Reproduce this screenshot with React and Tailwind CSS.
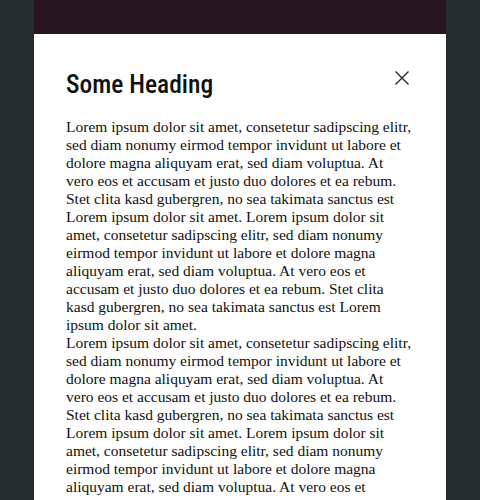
const lorem =
    "Lorem ipsum dolor sit amet, consetetur sadipscing elitr, sed diam nonumy eirmod tempor invidunt ut labore et dolore magna aliquyam erat, sed diam voluptua. At vero eos et accusam et justo duo dolores et ea rebum. Stet clita kasd gubergren, no sea takimata sanctus est Lorem ipsum dolor sit amet. Lorem ipsum dolor sit amet, consetetur sadipscing elitr, sed diam nonumy eirmod tempor invidunt ut labore et dolore magna aliquyam erat, sed diam voluptua. At vero eos et accusam et justo duo dolores et ea rebum. Stet clita kasd gubergren, no sea takimata sanctus est Lorem ipsum dolor sit amet.";

function CloseIcon() {
    return (
        <svg width="14" height="14" viewBox="0 0 14 14" fill="none" stroke="currentColor" strokeWidth="1.3">
            <path d="M0.5 0.5 L13.5 13.5 M13.5 0.5 L0.5 13.5" />
        </svg>
    );
}

export default function App() {
    return (
        <div className="h-[500px] overflow-hidden bg-[#272c2f] px-[34px]">
            {/* Top bar */}
            <div className="h-[34px] bg-[#271620]" />

            {/* Modal */}
            <div className="bg-white px-8 pt-8 pb-8">
                <div className="flex items-start justify-between mb-4">
                    <h2 className="h-9 leading-9 text-[25.5px] font-medium text-[#111] font-['Roboto',sans-serif] [font-stretch:condensed]">
                        Some Heading
                    </h2>
                    <button className="w-6 h-6 flex items-center justify-center text-[#222]">
                        <CloseIcon />
                    </button>
                </div>
                <div className="font-['Liberation_Serif',serif] text-[15.5px] leading-[18px] text-[#111]">
                    <p>{lorem}</p>
                    <p>{lorem}</p>
                </div>
            </div>
        </div>
    );
}
